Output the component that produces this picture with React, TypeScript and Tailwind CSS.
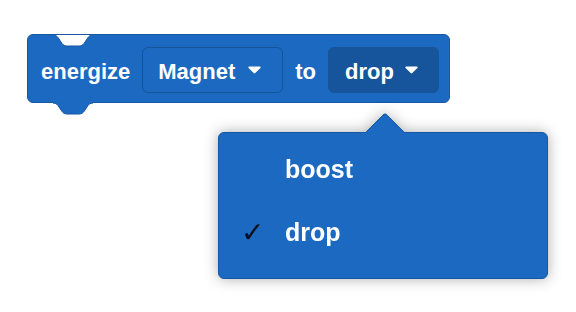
import { ReactNode } from 'react'

const font = { fontFamily: '"Liberation Sans", Arial, sans-serif' }

// little white caret used inside the dropdown fields
function Caret() {
  return (
    <svg width="13" height="8" viewBox="0 0 13 8" className="shrink-0">
      <path d="M1.2 0.5 H11.8 C12.6 0.5 13 1.3 12.4 1.9 L7.3 7.1 C6.9 7.5 6.1 7.5 5.7 7.1 L0.6 1.9 C0 1.3 0.4 0.5 1.2 0.5 Z" fill="#fff" />
    </svg>
  )
}

// notch shape, 40 wide x 11 deep
const notchPath =
  'M0 0 C2.5 0 3.8 1 5 2.5 L9 8.5 C10.2 10 11.5 11 14 11 H26 C28.5 11 29.8 10 31 8.5 L35 2.5 C36.2 1 37.5 0 40 0'

function Field({ children, selected }: { children: ReactNode; selected?: boolean }) {
  return (
    <div
      className={`flex items-center h-[46px] rounded-[6px] border ${
        selected
          ? 'bg-[#16549b] border-[#16549b] pl-[16px] pr-[20px] gap-[11px]'
          : 'bg-[#1b69c0] border-[#15539a] pl-[15px] pr-[21px] gap-[13px]'
      }`}
    >
      <span className="text-[22px] font-bold text-white leading-none pt-[3px]">{children}</span>
      <Caret />
    </div>
  )
}

export default function App() {
  return (
    <div className="relative w-[576px] h-[312px] bg-white overflow-hidden" style={font}>
      {/* the block */}
      <div className="absolute left-[27px] top-[34px]">
        <div className="relative flex items-center gap-[12px] h-[69px] pl-[13px] pr-[10px] pt-[3px] bg-[#1b69c0] border border-[#1758a3] rounded-[6px]">
          <span className="text-[22px] font-bold text-white leading-none pt-[3px]">energize</span>
          <Field>Magnet</Field>
          <span className="text-[22px] font-bold text-white leading-none pt-[3px]">to</span>
          <Field selected>drop</Field>

          {/* top notch */}
          <svg width="42" height="13" viewBox="-1 -1 42 13" className="absolute left-[24px] -top-[1px]">
            <path d={notchPath + ' Z'} fill="#fff" />
            <path d={notchPath} fill="none" stroke="#1758a3" strokeWidth="1" />
          </svg>
          {/* bottom tab */}
          <svg width="42" height="13" viewBox="-1 -1 42 13" className="absolute left-[24px] top-full">
            <path d={notchPath + ' Z'} fill="#1b69c0" />
            <path d={notchPath} fill="none" stroke="#1758a3" strokeWidth="1" />
            <rect x="0.5" y="-1" width="39" height="1.5" fill="#1b69c0" />
          </svg>
        </div>
      </div>

      {/* dropdown menu */}
      <div className="absolute left-[218px] top-[132px] drop-shadow-[0_0_7px_rgba(0,0,0,0.32)]">
        <div className="relative w-[330px] h-[147px] bg-[#1b69c0] border border-[#1758a3] rounded-[6px] pt-[5px]">
          <div className="absolute left-[152px] -top-[15px] w-[28px] h-[28px] rotate-45 bg-[#1b69c0] border-l border-t border-[#1758a3] rounded-tl-[4px]" />
          <div className="relative flex items-center h-[63px] pl-[66px]">
            <span className="text-[25px] font-bold text-white leading-none">boost</span>
          </div>
          <div className="relative flex items-center h-[63px] pl-[22px]">
            <span
              className="w-[44px] text-[28px] text-[#0b0f1a] leading-none"
              style={{ fontFamily: '"DejaVu Sans", sans-serif' }}
            >
              ✓
            </span>
            <span className="text-[25px] font-bold text-white leading-none">drop</span>
          </div>
        </div>
      </div>
    </div>
  )
}
